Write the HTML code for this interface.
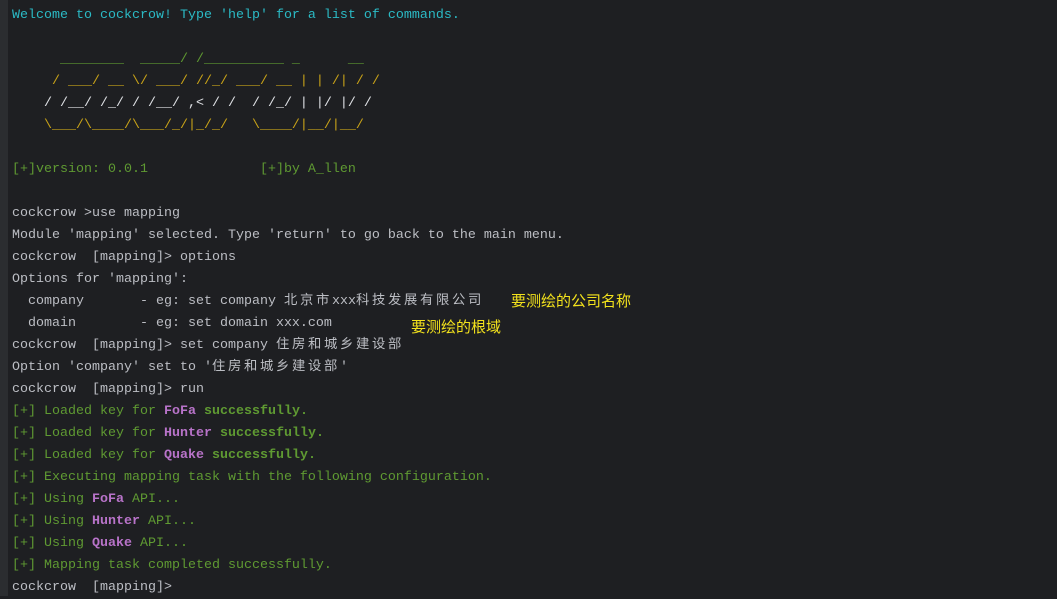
<!DOCTYPE html>
<html><head><meta charset="utf-8"><style>
html,body{margin:0;padding:0;}
body{width:1057px;height:596px;background:#1e1f22;overflow:hidden;position:relative;
font-family:"Liberation Mono","Noto Sans CJK SC",monospace;font-size:13.33px;color:#bcbec4;}
.bar{position:absolute;left:0;top:0;width:8px;height:596px;background:#2b2d30;}
.l{position:absolute;left:12px;white-space:pre;height:22px;line-height:22px;margin-top:1px;}
.c{color:#2bbac5}.g{color:#5f9a32}.y{color:#c9a318}.w{color:#dfe1e5}
.p{color:#b873c9;font-weight:bold}.b{font-weight:bold}
.cj{letter-spacing:2.67px;font-family:"Noto Sans CJK SC",sans-serif;line-height:0;}
.ann{position:absolute;color:#f3e21c;font-family:"Noto Sans CJK SC",sans-serif;font-size:15px;white-space:nowrap;line-height:20px;}
</style></head><body>
<div class="bar"></div>
<div class="l c" style="top:4px">Welcome to cockcrow! Type 'help' for a list of commands.</div>
<div class="l g" style="top:48px">      ________  _____/ /__________ _      __</div>
<div class="l y" style="top:70px">     / ___/ __ \/ ___/ //_/ ___/ __ | | /| / /</div>
<div class="l w" style="top:92px">    / /__/ /_/ / /__/ ,&lt; / /  / /_/ | |/ |/ /</div>
<div class="l y" style="top:114px">    \___/\____/\___/_/|_/_/   \____/|__/|__/</div>
<div class="l g" style="top:158px">[+]version: 0.0.1              [+]by A_llen</div>
<div class="l" style="top:202px">cockcrow &gt;use mapping</div>
<div class="l" style="top:224px">Module 'mapping' selected. Type 'return' to go back to the main menu.</div>
<div class="l" style="top:246px">cockcrow  [mapping]&gt; options</div>
<div class="l" style="top:268px">Options for 'mapping':</div>
<div class="l" style="top:290px">  company       - eg: set company <span class="cj">北京市</span>xxx<span class="cj">科技发展有限公司</span></div>
<div class="l" style="top:312px">  domain        - eg: set domain xxx.com</div>
<div class="l" style="top:334px">cockcrow  [mapping]&gt; set company <span class="cj">住房和城乡建设部</span></div>
<div class="l" style="top:356px">Option 'company' set to '<span class="cj">住房和城乡建设部</span>'</div>
<div class="l" style="top:378px">cockcrow  [mapping]&gt; run</div>
<div class="l g" style="top:400px">[+] Loaded key for <span class="p">FoFa</span> <span class="b">successfully.</span></div>
<div class="l g" style="top:422px">[+] Loaded key for <span class="p">Hunter</span> <span class="b">successfully.</span></div>
<div class="l g" style="top:444px">[+] Loaded key for <span class="p">Quake</span> <span class="b">successfully.</span></div>
<div class="l g" style="top:466px">[+] Executing mapping task with the following configuration.</div>
<div class="l g" style="top:488px">[+] Using <span class="p">FoFa</span> API...</div>
<div class="l g" style="top:510px">[+] Using <span class="p">Hunter</span> API...</div>
<div class="l g" style="top:532px">[+] Using <span class="p">Quake</span> API...</div>
<div class="l g" style="top:554px">[+] Mapping task completed successfully.</div>
<div class="l" style="top:576px">cockcrow  [mapping]&gt;</div>
<div class="ann" style="left:511px;top:291px">要测绘的公司名称</div>
<div class="ann" style="left:411px;top:317px">要测绘的根域</div>
</body></html>
